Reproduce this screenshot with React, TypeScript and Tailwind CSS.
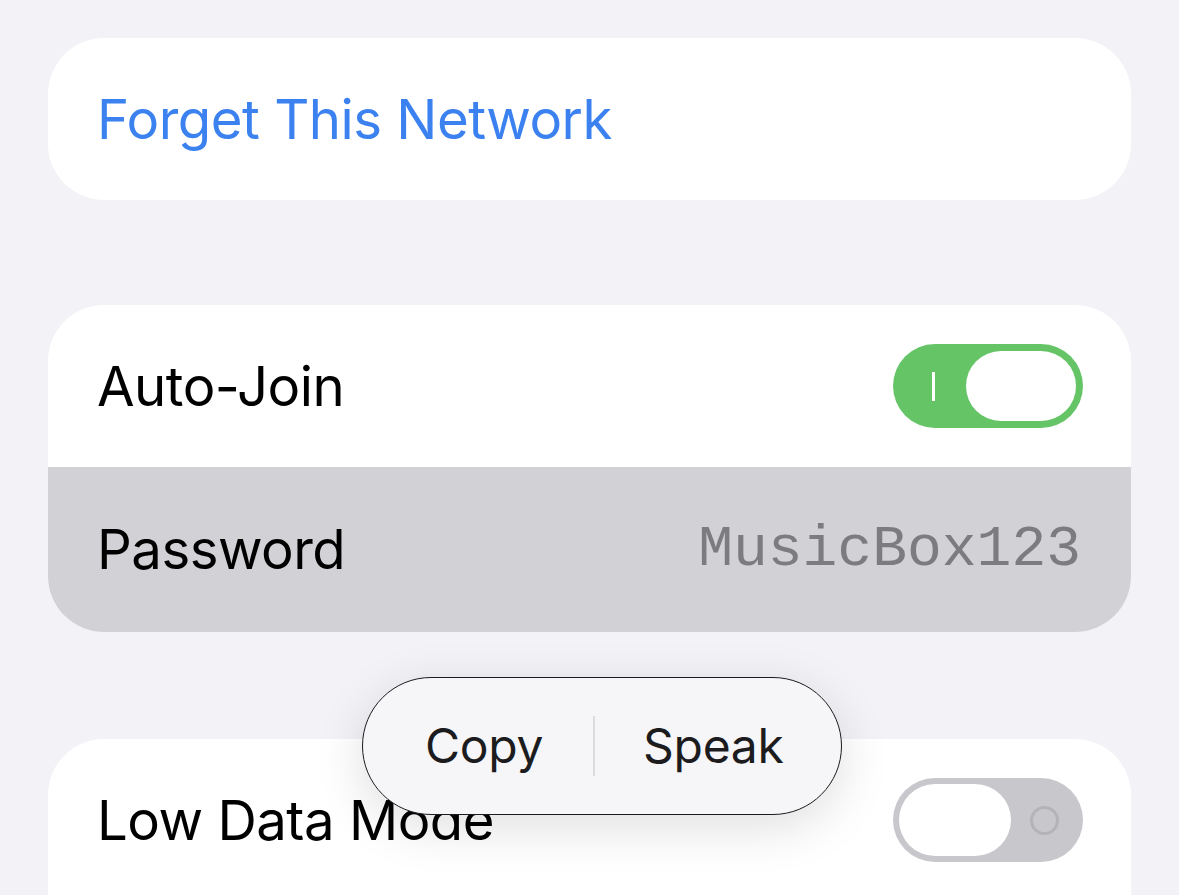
import { ReactNode } from "react";

const sans = "font-['Inter','Noto_Sans',sans-serif]";

function Toggle({ on }: { on: boolean }) {
  if (on) {
    return (
      <div className="flex h-[84px] w-[190px] items-center rounded-full bg-[#65c466] p-[7px]">
        <div className="flex w-[66px] justify-center">
          <span className="block h-[29px] w-[3px] bg-white" />
        </div>
        <div className="h-full flex-1 rounded-full bg-white" />
      </div>
    );
  }
  return (
    <div className="flex h-[84px] w-[190px] items-center rounded-full bg-[#c7c7cc] p-[6px]">
      <div className="h-full w-[112px] rounded-full bg-white" />
      <div className="flex flex-1 justify-center">
        <span className="block h-[29px] w-[29px] rounded-full border-[3px] border-[#b4b4b8]" />
      </div>
    </div>
  );
}

function Row({ label, right, className = "" }: { label: string; right?: ReactNode; className?: string }) {
  return (
    <div className={`flex h-[162px] items-center justify-between pl-[49px] pr-[48px] ${className}`}>
      <span className={`${sans} text-[54.5px] leading-none tracking-[-0.5px] text-black`}>{label}</span>
      {right}
    </div>
  );
}

export default function App() {
  return (
    <div className="relative h-[895px] w-[1179px] overflow-hidden bg-[#f2f2f7] px-12 pt-[38px]">
      <div className="flex h-[162px] items-center rounded-[56px] bg-white pl-[49px]">
        <span className={`${sans} text-[54.5px] leading-none tracking-[-0.5px] text-[#3b82f0]`}>
          Forget This Network
        </span>
      </div>

      <div className="mt-[105px] overflow-hidden rounded-[56px] bg-white">
        <Row label="Auto-Join" right={<Toggle on />} className="h-[161px]" />
        <Row
          label="Password"
          className="h-[165px] bg-[#d1d1d6] pr-[50px]"
          right={
            <span className="font-['Liberation_Mono','DejaVu_Sans_Mono',monospace] text-[58px] leading-none text-[#7c7c80]">
              MusicBox123
            </span>
          }
        />
      </div>

      <div className="mt-[107px] rounded-t-[56px] bg-white">
        <Row label="Low Data Mode" right={<Toggle on={false} />} />
        <div className="h-[60px]" />
      </div>

      {/* edit menu over the password row */}
      <div className="absolute left-[362px] top-[677px] flex h-[138px] w-[480px] items-center rounded-full border border-[#1c1c1e] bg-[#f6f6f8] pl-[62px] shadow-[0_12px_50px_rgba(0,0,0,0.13)]">
        <span className={`${sans} text-[48px] leading-none tracking-[-0.3px] text-[#1c1c1e]`}>Copy</span>
        <span className="ml-[50px] block h-[60px] w-[2px] bg-[#dcdce0]" />
        <span className={`${sans} ml-[48px] text-[48px] leading-none tracking-[-0.3px] text-[#1c1c1e]`}>Speak</span>
      </div>
    </div>
  );
}
